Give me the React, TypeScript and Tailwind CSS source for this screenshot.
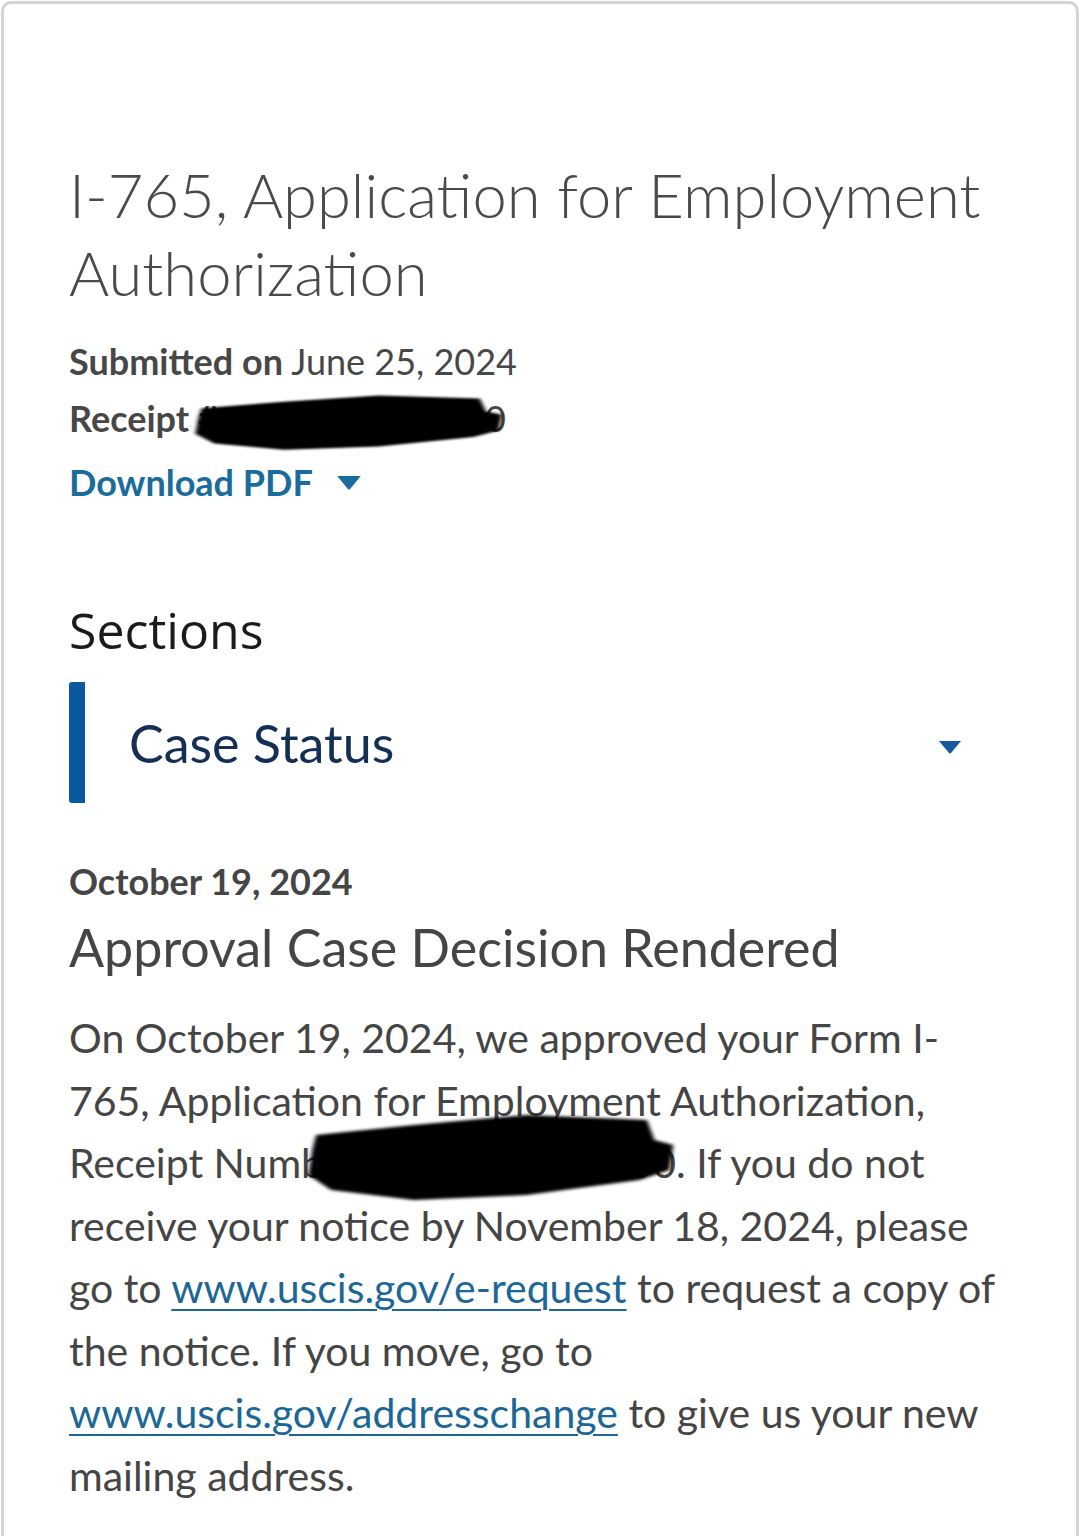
import { useState } from "react"

const sans = "font-['Lato','Liberation_Sans',sans-serif]"

function Redaction({ className }: { className: string }) {
  return (
    <svg className={`pointer-events-none absolute ${className}`} viewBox="0 0 100 40" preserveAspectRatio="none">
      <defs>
        <filter id="soft" x="-10%" y="-10%" width="120%" height="120%">
          <feGaussianBlur stdDeviation="0.6" />
        </filter>
      </defs>
      <path
        d="M4 12 L30 8 L60 4 L92 6 L94 14 L99 16 L98 26 L90 30 L60 36 L30 38 L8 34 L2 28 L3 18 Z"
        fill="#050505"
        filter="url(#soft)"
      />
    </svg>
  )
}

function Caret({ className }: { className: string }) {
  return (
    <svg className={className} viewBox="0 0 24 14" fill="currentColor">
      <path d="M1 1 L23 1 L13 13 Q12 14 11 13 Z" />
    </svg>
  )
}

export default function App() {
  const [open, setOpen] = useState(true)

  return (
    <div className={`min-h-screen bg-white pt-px px-px ${sans}`}>
      <div className="h-[1540px] rounded-t-[10px] border-[3px] border-b-0 border-[#d4d4d4] bg-white pl-[65px] pr-[40px]">
        <h1 className="pt-[151px] text-[61.5px] font-light leading-[78px] text-[#4a4a4a]">
          I-765, Application for Employment
          <br />
          Authorization
        </h1>

        <div className="relative mt-[22px] text-[36px] leading-[57px] text-[#474747]">
          <p>
            <span className="font-bold">Submitted on</span> June 25, 2024
          </p>
          <p>
            <span className="font-bold">Receipt #:</span> IOE0000000000
          </p>
          <Redaction className="left-[120px] top-[56px] h-[64px] w-[316px]" />
        </div>

        <button className="mt-[10px] flex items-center gap-[22px] text-[36px] font-bold leading-[50px] text-[#1a6c9d]">
          Download PDF
          <Caret className="h-[15px] w-[28px]" />
        </button>

        <h2 className="mt-[93px] font-['Open_Sans','Noto_Sans',sans-serif] text-[50px] leading-[60px] text-[#1b1b1b]">
          Sections
        </h2>

        <button
          onClick={() => setOpen((prev) => !prev)}
          className="mt-[22px] flex h-[121px] w-full items-center rounded-l-[3px] border-l-[16px] border-[#0c58a0] pl-[44px] pr-[74px]"
        >
          <span className="flex-1 text-left text-[52px] text-[#142f55]">Case Status</span>
          <Caret className="mt-[8px] h-[14px] w-[24px] text-[#155a9e]" />
        </button>

        {open && (
          <div className="mt-[56px] text-[#454545]">
            <p className="text-[36px] font-bold leading-[44px]">October 19, 2024</p>
            <p className="mt-[12px] text-[52px] leading-[64px]">Approval Case Decision Rendered</p>
            <div className="relative mt-[28px] whitespace-nowrap text-[41px] leading-[62.5px]">
              <p>
                On October 19, 2024, we approved your Form I-
                <br />
                765, Application for Employment Authorization,
                <br />
                Receipt Number IOE0000000000. If you do not
                <br />
                receive your notice by November 18, 2024, please
                <br />
                go to{" "}
                <a href="#" className="text-[#1c6797] underline decoration-2 underline-offset-[6px]">
                  www.uscis.gov/e-request
                </a>{" "}
                to request a copy of
                <br />
                the notice. If you move, go to
                <br />
                <a href="#" className="text-[#1c6797] underline decoration-2 underline-offset-[6px]">
                  www.uscis.gov/addresschange
                </a>{" "}
                to give us your new
                <br />
                mailing address.
              </p>
              <Redaction className="left-[232px] top-[98px] h-[100px] w-[376px]" />
            </div>
          </div>
        )}
      </div>
    </div>
  )
}
